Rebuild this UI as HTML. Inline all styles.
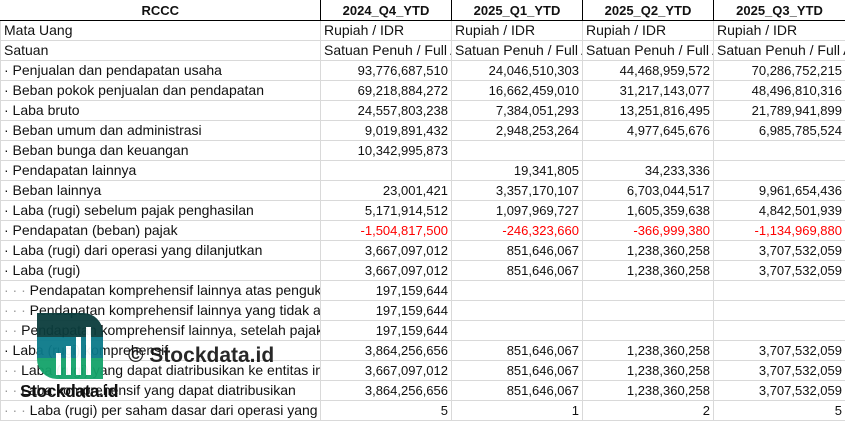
<!DOCTYPE html>
<html><head><meta charset="utf-8"><style>
body{margin:0;width:845px;height:421px;overflow:hidden;background:#fff;font-family:"Liberation Sans",sans-serif;position:relative}
table{border-collapse:collapse;table-layout:fixed;position:absolute;left:0;top:0;width:845px}
td{height:19px;padding:0 3px;border:1px solid #d9d9d9;font-size:14px;white-space:nowrap;overflow:hidden;color:#111;line-height:19px}
td.n{font-size:13px}
tr.h td{font-weight:bold;text-align:center;border:1px solid #000;border-top:none;height:20px;font-size:13px}
td.n{text-align:right}
.r{color:#f00}
.g{color:#999}
</style></head><body>
<table>
<colgroup><col style="width:320px"><col style="width:131px"><col style="width:131px"><col style="width:131px"><col style="width:132px"></colgroup>
<tr class="h"><td style="border-left:none">RCCC</td><td>2024_Q4_YTD</td><td>2025_Q1_YTD</td><td>2025_Q2_YTD</td><td>2025_Q3_YTD</td></tr>
<tr><td>Mata Uang</td><td>Rupiah / IDR</td><td>Rupiah / IDR</td><td>Rupiah / IDR</td><td>Rupiah / IDR</td></tr>
<tr><td>Satuan</td><td>Satuan Penuh / Full A</td><td>Satuan Penuh / Full A</td><td>Satuan Penuh / Full A</td><td>Satuan Penuh / Full A</td></tr>
<tr><td>· Penjualan dan pendapatan usaha</td><td class="n">93,776,687,510</td><td class="n">24,046,510,303</td><td class="n">44,468,959,572</td><td class="n">70,286,752,215</td></tr>
<tr><td>· Beban pokok penjualan dan pendapatan</td><td class="n">69,218,884,272</td><td class="n">16,662,459,010</td><td class="n">31,217,143,077</td><td class="n">48,496,810,316</td></tr>
<tr><td>· Laba bruto</td><td class="n">24,557,803,238</td><td class="n">7,384,051,293</td><td class="n">13,251,816,495</td><td class="n">21,789,941,899</td></tr>
<tr><td>· Beban umum dan administrasi</td><td class="n">9,019,891,432</td><td class="n">2,948,253,264</td><td class="n">4,977,645,676</td><td class="n">6,985,785,524</td></tr>
<tr><td>· Beban bunga dan keuangan</td><td class="n">10,342,995,873</td><td></td><td></td><td></td></tr>
<tr><td>· Pendapatan lainnya</td><td></td><td class="n">19,341,805</td><td class="n">34,233,336</td><td></td></tr>
<tr><td>· Beban lainnya</td><td class="n">23,001,421</td><td class="n">3,357,170,107</td><td class="n">6,703,044,517</td><td class="n">9,961,654,436</td></tr>
<tr><td>· Laba (rugi) sebelum pajak penghasilan</td><td class="n">5,171,914,512</td><td class="n">1,097,969,727</td><td class="n">1,605,359,638</td><td class="n">4,842,501,939</td></tr>
<tr><td>· Pendapatan (beban) pajak</td><td class="n r">-1,504,817,500</td><td class="n r">-246,323,660</td><td class="n r">-366,999,380</td><td class="n r">-1,134,969,880</td></tr>
<tr><td>· Laba (rugi) dari operasi yang dilanjutkan</td><td class="n">3,667,097,012</td><td class="n">851,646,067</td><td class="n">1,238,360,258</td><td class="n">3,707,532,059</td></tr>
<tr><td>· Laba (rugi)</td><td class="n">3,667,097,012</td><td class="n">851,646,067</td><td class="n">1,238,360,258</td><td class="n">3,707,532,059</td></tr>
<tr><td><span class="g">· · ·</span> Pendapatan komprehensif lainnya atas penguku</td><td class="n">197,159,644</td><td></td><td></td><td></td></tr>
<tr><td><span class="g">· · ·</span> Pendapatan komprehensif lainnya yang tidak ak</td><td class="n">197,159,644</td><td></td><td></td><td></td></tr>
<tr><td><span class="g">· ·</span> Pendapatan komprehensif lainnya, setelah pajak</td><td class="n">197,159,644</td><td></td><td></td><td></td></tr>
<tr><td>· Laba (rugi) komprehensif</td><td class="n">3,864,256,656</td><td class="n">851,646,067</td><td class="n">1,238,360,258</td><td class="n">3,707,532,059</td></tr>
<tr><td><span class="g">· ·</span> Laba (rugi) yang dapat diatribusikan ke entitas induk</td><td class="n">3,667,097,012</td><td class="n">851,646,067</td><td class="n">1,238,360,258</td><td class="n">3,707,532,059</td></tr>
<tr><td><span class="g">· ·</span> Laba komprehensif yang dapat diatribusikan</td><td class="n">3,864,256,656</td><td class="n">851,646,067</td><td class="n">1,238,360,258</td><td class="n">3,707,532,059</td></tr>
<tr><td><span class="g">· · ·</span> Laba (rugi) per saham dasar dari operasi yang dilanjutkan</td><td class="n">5</td><td class="n">1</td><td class="n">2</td><td class="n">5</td></tr>
</table>
<div style="position:absolute;left:37px;top:313px;width:66px;height:66px;border-radius:0 20px 0 20px;overflow:hidden;opacity:.95">
<div style="height:24px;background:#0b3d3d"></div>
<div style="height:21px;background:#0b7a8a"></div>
<div style="height:21px;background:#14a36a"></div>
<div style="position:absolute;left:19px;top:40px;width:5px;height:22px;background:#fff"></div>
<div style="position:absolute;left:29px;top:33px;width:5px;height:29px;background:#fff"></div>
<div style="position:absolute;left:39px;top:24px;width:5px;height:38px;background:#fff"></div>
<div style="position:absolute;left:49px;top:14px;width:5px;height:48px;background:#fff"></div>
</div>
<div style="position:absolute;left:20px;top:381px;font-weight:bold;font-size:17.5px;color:#111;letter-spacing:-0.5px">Stockdata.id</div>
<div style="position:absolute;left:128px;top:344px;font-weight:bold;font-size:21px;color:#111;opacity:.9">© Stockdata.id</div>
</body></html>
